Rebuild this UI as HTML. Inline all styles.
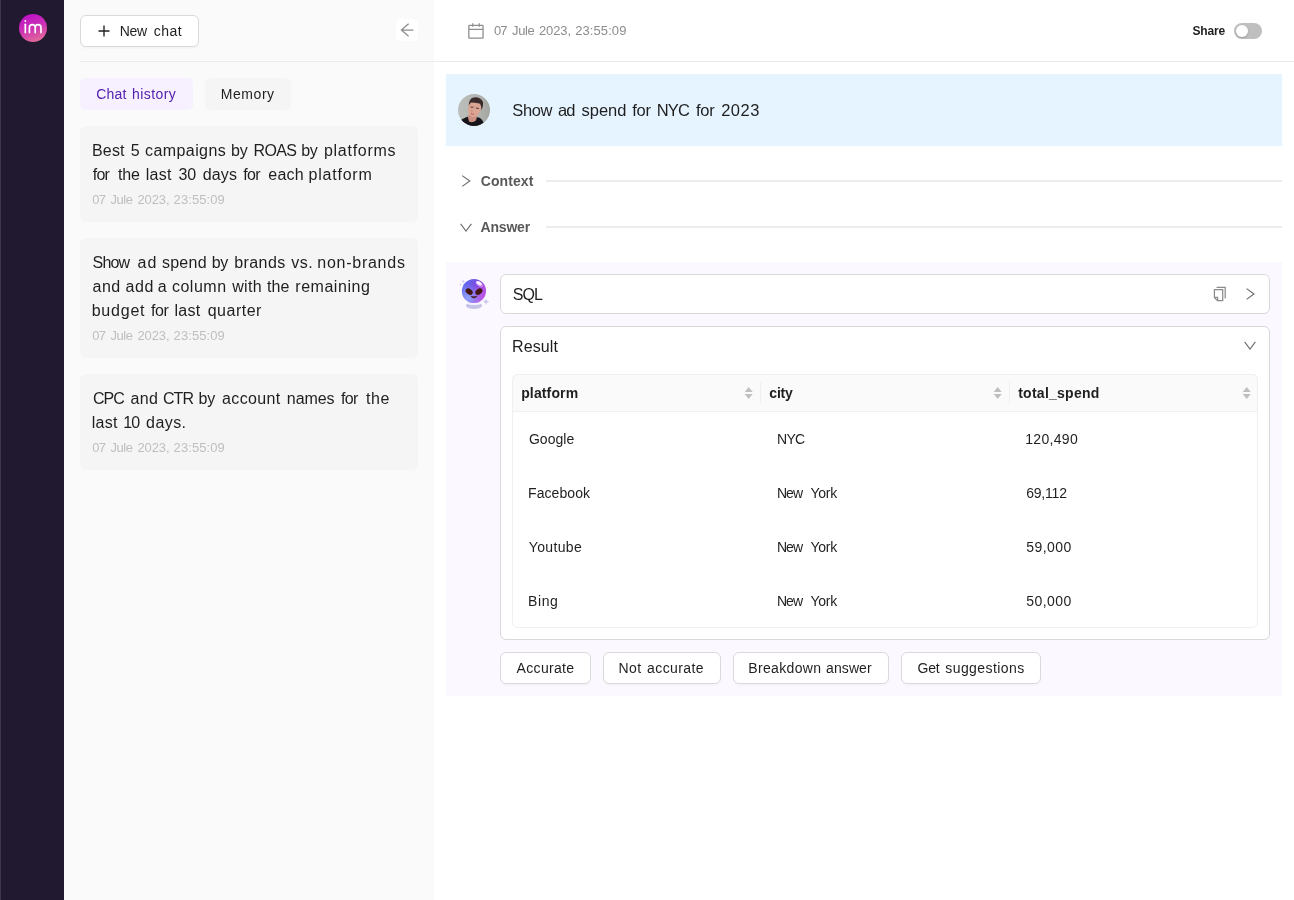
<!DOCTYPE html>
<html>
<head>
<meta charset="utf-8">
<title>Chat</title>
<style>
html,body{margin:0;padding:0;}
body{width:1294px;height:900px;overflow:hidden;background:#fff;position:relative;font-family:"Liberation Sans",sans-serif;}
.a{position:absolute;box-sizing:border-box;}
.t{position:absolute;white-space:nowrap;}
.btn{position:absolute;box-sizing:border-box;background:#fff;border:1px solid #d9d9d9;border-radius:6px;box-shadow:0 2px 0 rgba(0,0,0,0.02);}
.card{position:absolute;left:80px;width:338px;background:#f5f5f5;border-radius:6px;}
svg{position:absolute;overflow:visible;}
</style>
</head>
<body>
<!-- sidebar -->
<div class="a" style="left:0;top:0;width:64px;height:900px;background:#201930;"></div>
<div class="a" style="left:0;top:0;width:1px;height:900px;background:#3d3649;"></div>
<div class="a" style="left:19px;top:14px;width:28px;height:28px;border-radius:50%;background:linear-gradient(160deg,#bd0cc9 5%,#cc33b4 50%,#ea7a92 100%);"></div>
<svg style="left:19px;top:14px" width="28" height="28" viewBox="0 0 28 28"><g fill="none" stroke="#fff" stroke-width="1.7" stroke-linecap="round"><path d="M6.3 10.3V18.6"/><path d="M10.4 18.6V13.6a2.9 2.9 0 0 1 5.8 0V18.6M16.2 13.6a2.9 2.9 0 0 1 5.8 0V18.6"/></g><circle cx="6.3" cy="6.9" r="1" fill="#fff"/></svg>

<!-- side panel -->
<div class="a" style="left:64px;top:0;width:370px;height:900px;background:#fafafa;"></div>
<div class="a" style="left:80px;top:61px;width:1214px;height:1px;background:#ebebeb;"></div>

<div class="btn" style="left:80px;top:15px;width:119px;height:32px;"></div>
<svg style="left:98px;top:25px" width="12" height="12" viewBox="0 0 12 12"><path d="M6 0.5V11.5M0.5 6H11.5" stroke="#1f1f1f" stroke-width="1.35" fill="none"/></svg>

<div class="a" style="left:396px;top:19px;width:22px;height:22px;background:#fff;border-radius:5px;"></div>
<svg style="left:400px;top:23px" width="14" height="14" viewBox="0 0 14 14"><path d="M13.4 7H1.4M8.6 0.7L1.4 7l7.2 6.3" stroke="#8c8c8c" stroke-width="1.25" fill="none"/></svg>

<div class="a" style="left:80px;top:78px;width:113px;height:32px;background:#f7f0ff;border-radius:5px;"></div>
<div class="a" style="left:205px;top:78px;width:86px;height:32px;background:#f5f5f5;border-radius:6px;"></div>

<div class="card" style="top:126px;height:96px;"></div>
<div class="card" style="top:238px;height:120px;"></div>
<div class="card" style="top:374px;height:96px;"></div>

<!-- main header -->
<svg style="left:468px;top:23px" width="16" height="16" viewBox="0 0 16 16"><g fill="none" stroke="#8f8f8f" stroke-width="1.3"><rect x="0.85" y="2.45" width="14.2" height="12.6" rx="0.4"/><path d="M0.85 6.4H15.05M4.7 0.2V3.7M11.2 0.2V3.7"/></g></svg>
<div class="a" style="left:1234px;top:23px;width:28px;height:16px;border-radius:8px;background:#bfbfbf;"></div>
<div class="a" style="left:1236px;top:25px;width:12px;height:12px;border-radius:50%;background:#fff;box-shadow:0 1px 2px rgba(0,35,11,0.2);"></div>

<!-- question -->
<div class="a" style="left:446px;top:74px;width:836px;height:72px;background:#e6f4ff;"></div>
<svg style="left:458px;top:94px" width="32" height="32" viewBox="0 0 32 32">
<defs><clipPath id="av"><circle cx="16" cy="16" r="16"/></clipPath><linearGradient id="avb" x1="0" y1="0" x2="1" y2="0"><stop offset="0" stop-color="#bcbebb"/><stop offset="0.55" stop-color="#b4b6b2"/><stop offset="1" stop-color="#a3a6a1"/></linearGradient></defs>
<g clip-path="url(#av)">
<rect width="32" height="32" fill="url(#avb)"/>
<path d="M2 32L3.500 25.500Q8 23 11 22.300L21 23.500Q25.500 25.500 26.500 32Z" fill="#15151a"/>
<path d="M9.500 21.500L11 27.500Q14.500 29.500 18 26.500L19.800 20Z" fill="#c98f80"/>
<g transform="rotate(7 16 16)">
<path d="M10.400 10Q9.200 17 11.700 21.500Q14.700 24.600 18.200 22.600Q22.700 19 23 11Q17.200 5.500 10.400 10Z" fill="#dba594"/>
<path d="M10.200 12.500Q9.700 6 13.200 4Q19.200 1.500 23.700 6.500Q25.200 10 23.200 15.500Q23 10.500 20.700 9Q15.200 8.500 12.200 9Q10.700 10.500 10.200 12.500Z" fill="#3a2a29"/>
<path d="M12.200 13.400h3M17.700 13.800h3" stroke="#5a3a36" stroke-width="1"/>
<path d="M13.600 15.500q1 3 .3 3.600" stroke="#c98a7c" stroke-width="0.700" fill="none"/>
<path d="M13.300 20q1.500 .7 3.200 0" stroke="#c25e5c" stroke-width="1.100" fill="none"/>
</g>
</g></svg>

<!-- context / answer -->
<svg style="left:461px;top:175px" width="10" height="12" viewBox="0 0 10 12"><path d="M1.2 0.6L8.8 6L1.2 11.4" stroke="#6b6b6b" stroke-width="1.1" fill="none"/></svg>
<div class="a" style="left:546px;top:180px;width:736px;height:2px;background:#ededed;"></div>
<svg style="left:460px;top:223px" width="12" height="9" viewBox="0 0 12 9"><path d="M0.6 0.8L6 8L11.4 0.8" stroke="#6b6b6b" stroke-width="1.1" fill="none"/></svg>
<div class="a" style="left:546px;top:226px;width:736px;height:2px;background:#ededed;"></div>

<!-- answer panel -->
<div class="a" style="left:446px;top:262px;width:836px;height:434px;background:#fbf9ff;"></div>

<!-- alien -->
<svg style="left:458px;top:276px" width="34" height="34" viewBox="0 0 34 34">
<defs>
<linearGradient id="al" x1="0" y1="0.2" x2="1" y2="0.8"><stop offset="0" stop-color="#5a6ff0"/><stop offset="0.45" stop-color="#7c4ce0"/><stop offset="0.75" stop-color="#b04fe6"/><stop offset="1" stop-color="#c35de8"/></linearGradient>
<radialGradient id="al2" cx="0.25" cy="0.8" r="0.6"><stop offset="0" stop-color="#8fb0ff" stop-opacity="0.9"/><stop offset="1" stop-color="#8fb0ff" stop-opacity="0"/></radialGradient>
</defs>
<ellipse cx="16" cy="29.6" rx="8.2" ry="3.5" fill="#c6c4e6"/><ellipse cx="16" cy="26.9" rx="7.4" ry="2.2" fill="#f3f1fc"/>
<circle cx="16" cy="15" r="12.1" fill="url(#al)"/>
<circle cx="16" cy="15" r="12.1" fill="url(#al2)"/>
<ellipse cx="21.4" cy="8.2" rx="4.2" ry="2.3" transform="rotate(35 21.4 8.2)" fill="#e9a8f5" opacity="0.55"/><ellipse cx="21" cy="7.2" rx="3.1" ry="1.6" transform="rotate(32 21 7.2)" fill="#fff" opacity="0.92"/>
<ellipse cx="11.2" cy="15.6" rx="3.9" ry="2.7" transform="rotate(38 11.2 15.6)" fill="#43160f"/>
<ellipse cx="20.9" cy="15.6" rx="3.9" ry="2.7" transform="rotate(-38 20.9 15.6)" fill="#43160f"/>
<path d="M12.9 20.2Q16 23.6 19.1 20.2Q16 21.4 12.9 20.2Z" fill="#43160f" stroke="#43160f" stroke-width="0.6" stroke-linejoin="round"/>
<path d="M28 22.4l.9 2.4 2.4.9-2.4.9-.9 2.400-.9-2.400-2.400-.9 2.400-.9z" fill="#c7c4ee"/>
<path d="M5.300 3.200l.6 1.500 1.500.6-1.500.6-.6 1.500-.6-1.500-1.500-.6 1.500-.6z" fill="#d3d0f2"/>
<path d="M2.500 7.200l.45 1.100 1.100.45-1.100.45-.45 1.100-.45-1.100-1.100-.45 1.100-.45z" fill="#d3d0f2"/>
</svg>

<!-- SQL box -->
<div class="a" style="left:500px;top:274px;width:770px;height:40px;background:#fff;border:1px solid #d9d9d9;border-radius:6px;"></div>
<svg style="left:1213px;top:286px" width="14" height="16" viewBox="0 0 14 16"><g fill="none" stroke="#8c8c8c" stroke-width="1.25"><path d="M3.600 1.300H12.200V12.400"/><path d="M1.400 3.500H9.700V14.600H4.400L1.400 11.600Z"/><path d="M1.600 11.400H4.600V14.400"/></g></svg>
<svg style="left:1246px;top:288px" width="9" height="12" viewBox="0 0 9 12"><path d="M0.600 0.600L8 6L0.600 11.400" stroke="#6b6b6b" stroke-width="1.100" fill="none"/></svg>

<!-- Result box -->
<div class="a" style="left:500px;top:326px;width:770px;height:314px;background:#fff;border:1px solid #d9d9d9;border-radius:6px;"></div>
<svg style="left:1244px;top:341.4px" width="12" height="9" viewBox="0 0 12 9"><path d="M0.600 0.800L6 8L11.400 0.800" stroke="#6b6b6b" stroke-width="1.100" fill="none"/></svg>

<!-- table -->
<div class="a" style="left:512px;top:374px;width:746px;height:254px;background:#fff;border:1px solid #f0f0f0;border-radius:6px;"></div>
<div class="a" style="left:512px;top:374px;width:746px;height:38px;background:#fafafa;border:1px solid #f0f0f0;border-radius:6px 6px 0 0;"></div>
<div class="a" style="left:760px;top:382px;width:1px;height:22px;background:#f0f0f0;"></div>
<div class="a" style="left:1009px;top:382px;width:1px;height:22px;background:#f0f0f0;"></div>
<svg style="left:744px;top:387px" width="9" height="12" viewBox="0 0 9 12"><path d="M4.700 0L8.700 5H0.700Z M4.700 12L8.700 7H0.700Z" fill="#bfbfbf"/></svg>
<svg style="left:993px;top:387px" width="9" height="12" viewBox="0 0 9 12"><path d="M4.700 0L8.700 5H0.700Z M4.700 12L8.700 7H0.700Z" fill="#bfbfbf"/></svg>
<svg style="left:1241.500px;top:387px" width="9" height="12" viewBox="0 0 9 12"><path d="M4.700 0L8.700 5H0.700Z M4.700 12L8.700 7H0.700Z" fill="#bfbfbf"/></svg>

<!-- buttons -->
<div class="btn" style="left:500px;top:652px;width:91px;height:32px;"></div>
<div class="btn" style="left:603px;top:652px;width:118px;height:32px;"></div>
<div class="btn" style="left:733px;top:652px;width:156px;height:32px;"></div>
<div class="btn" style="left:901px;top:652px;width:140px;height:32px;"></div>

<div id="txt" style="position:absolute;left:0;top:0;width:1294px;height:900px;will-change:transform;">
<span class="t" style="left:119.80px;top:21.00px;font-size:14px;line-height:21px;color:#1f1f1f;letter-spacing:-0.298px;">New</span>
<span class="t" style="left:153.80px;top:21.00px;font-size:14px;line-height:21px;color:#1f1f1f;letter-spacing:0.476px;">chat</span>
<span class="t" style="left:96.30px;top:84.00px;font-size:14px;line-height:21px;color:#5521ae;letter-spacing:0.139px;">Chat</span>
<span class="t" style="left:132.00px;top:84.00px;font-size:14px;line-height:21px;color:#5521ae;letter-spacing:0.428px;">history</span>
<span class="t" style="left:220.80px;top:84.00px;font-size:14px;line-height:21px;color:#1f1f1f;letter-spacing:0.548px;">Memory</span>
<span class="t" style="left:92.00px;top:139.00px;font-size:16px;line-height:24px;color:#1f1f1f;letter-spacing:0.177px;">Best</span>
<span class="t" style="left:130.70px;top:139.00px;font-size:16px;line-height:24px;color:#1f1f1f;">5</span>
<span class="t" style="left:145.10px;top:139.00px;font-size:16px;line-height:24px;color:#1f1f1f;letter-spacing:0.403px;">campaigns</span>
<span class="t" style="left:231.00px;top:139.00px;font-size:16px;line-height:24px;color:#1f1f1f;letter-spacing:-0.198px;">by</span>
<span class="t" style="left:253.50px;top:139.00px;font-size:16px;line-height:24px;color:#1f1f1f;letter-spacing:-0.624px;">ROAS</span>
<span class="t" style="left:301.30px;top:139.00px;font-size:16px;line-height:24px;color:#1f1f1f;letter-spacing:-0.398px;">by</span>
<span class="t" style="left:323.90px;top:139.00px;font-size:16px;line-height:24px;color:#1f1f1f;letter-spacing:0.738px;">platforms</span>
<span class="t" style="left:92.80px;top:163.00px;font-size:16px;line-height:24px;color:#1f1f1f;letter-spacing:-0.822px;">for</span>
<span class="t" style="left:118.00px;top:163.00px;font-size:16px;line-height:24px;color:#1f1f1f;letter-spacing:-0.122px;">the</span>
<span class="t" style="left:145.80px;top:163.00px;font-size:16px;line-height:24px;color:#1f1f1f;letter-spacing:0.216px;">last</span>
<span class="t" style="left:178.60px;top:163.00px;font-size:16px;line-height:24px;color:#1f1f1f;letter-spacing:-0.298px;">30</span>
<span class="t" style="left:202.70px;top:163.00px;font-size:16px;line-height:24px;color:#1f1f1f;letter-spacing:0.168px;">days</span>
<span class="t" style="left:243.20px;top:163.00px;font-size:16px;line-height:24px;color:#1f1f1f;letter-spacing:-0.622px;">for</span>
<span class="t" style="left:268.30px;top:163.00px;font-size:16px;line-height:24px;color:#1f1f1f;letter-spacing:0.234px;">each</span>
<span class="t" style="left:308.60px;top:163.00px;font-size:16px;line-height:24px;color:#1f1f1f;letter-spacing:0.762px;">platform</span>
<span class="t" style="left:92.34px;top:190.00px;font-size:13px;line-height:20px;color:#bfbfbf;letter-spacing:-0.900px;">07</span>
<span class="t" style="left:110.50px;top:190.00px;font-size:13px;line-height:20px;color:#bfbfbf;letter-spacing:-0.439px;">Jule</span>
<span class="t" style="left:137.40px;top:190.00px;font-size:13px;line-height:20px;color:#bfbfbf;letter-spacing:-0.105px;">2023,</span>
<span class="t" style="left:173.60px;top:190.00px;font-size:13px;line-height:20px;color:#bfbfbf;letter-spacing:0.089px;">23:55:09</span>
<span class="t" style="left:92.50px;top:251.00px;font-size:16px;line-height:24px;color:#1f1f1f;letter-spacing:-0.790px;">Show</span>
<span class="t" style="left:137.60px;top:251.00px;font-size:16px;line-height:24px;color:#1f1f1f;letter-spacing:1.102px;">ad</span>
<span class="t" style="left:161.90px;top:251.00px;font-size:16px;line-height:24px;color:#1f1f1f;letter-spacing:0.276px;">spend</span>
<span class="t" style="left:211.70px;top:251.00px;font-size:16px;line-height:24px;color:#1f1f1f;letter-spacing:-0.398px;">by</span>
<span class="t" style="left:234.20px;top:251.00px;font-size:16px;line-height:24px;color:#1f1f1f;letter-spacing:0.436px;">brands</span>
<span class="t" style="left:291.30px;top:251.00px;font-size:16px;line-height:24px;color:#1f1f1f;letter-spacing:0.500px;">vs.</span>
<span class="t" style="left:317.30px;top:251.00px;font-size:16px;line-height:24px;color:#1f1f1f;letter-spacing:0.739px;">non-brands</span>
<span class="t" style="left:92.50px;top:275.00px;font-size:16px;line-height:24px;color:#1f1f1f;letter-spacing:0.502px;">and</span>
<span class="t" style="left:125.60px;top:275.00px;font-size:16px;line-height:24px;color:#1f1f1f;letter-spacing:0.602px;">add</span>
<span class="t" style="left:157.85px;top:275.00px;font-size:16px;line-height:24px;color:#1f1f1f;">a</span>
<span class="t" style="left:171.90px;top:275.00px;font-size:16px;line-height:24px;color:#1f1f1f;letter-spacing:0.524px;">column</span>
<span class="t" style="left:232.20px;top:275.00px;font-size:16px;line-height:24px;color:#1f1f1f;letter-spacing:0.348px;">with</span>
<span class="t" style="left:267.00px;top:275.00px;font-size:16px;line-height:24px;color:#1f1f1f;letter-spacing:0.128px;">the</span>
<span class="t" style="left:295.30px;top:275.00px;font-size:16px;line-height:24px;color:#1f1f1f;letter-spacing:0.530px;">remaining</span>
<span class="t" style="left:91.70px;top:299.00px;font-size:16px;line-height:24px;color:#1f1f1f;letter-spacing:0.782px;">budget</span>
<span class="t" style="left:151.10px;top:299.00px;font-size:16px;line-height:24px;color:#1f1f1f;letter-spacing:-0.522px;">for</span>
<span class="t" style="left:174.60px;top:299.00px;font-size:16px;line-height:24px;color:#1f1f1f;letter-spacing:0.216px;">last</span>
<span class="t" style="left:207.70px;top:299.00px;font-size:16px;line-height:24px;color:#1f1f1f;letter-spacing:0.505px;">quarter</span>
<span class="t" style="left:92.34px;top:326.00px;font-size:13px;line-height:20px;color:#bfbfbf;letter-spacing:-0.900px;">07</span>
<span class="t" style="left:110.50px;top:326.00px;font-size:13px;line-height:20px;color:#bfbfbf;letter-spacing:-0.439px;">Jule</span>
<span class="t" style="left:137.40px;top:326.00px;font-size:13px;line-height:20px;color:#bfbfbf;letter-spacing:-0.105px;">2023,</span>
<span class="t" style="left:173.60px;top:326.00px;font-size:13px;line-height:20px;color:#bfbfbf;letter-spacing:0.089px;">23:55:09</span>
<span class="t" style="left:92.94px;top:387.00px;font-size:16px;line-height:24px;color:#1f1f1f;letter-spacing:-0.900px;">CPC</span>
<span class="t" style="left:130.60px;top:387.00px;font-size:16px;line-height:24px;color:#1f1f1f;letter-spacing:0.252px;">and</span>
<span class="t" style="left:162.89px;top:387.00px;font-size:16px;line-height:24px;color:#1f1f1f;letter-spacing:-0.900px;">CTR</span>
<span class="t" style="left:198.40px;top:387.00px;font-size:16px;line-height:24px;color:#1f1f1f;letter-spacing:-0.098px;">by</span>
<span class="t" style="left:222.00px;top:387.00px;font-size:16px;line-height:24px;color:#1f1f1f;letter-spacing:0.368px;">account</span>
<span class="t" style="left:286.80px;top:387.00px;font-size:16px;line-height:24px;color:#1f1f1f;letter-spacing:-0.056px;">names</span>
<span class="t" style="left:340.90px;top:387.00px;font-size:16px;line-height:24px;color:#1f1f1f;letter-spacing:-0.672px;">for</span>
<span class="t" style="left:365.90px;top:387.00px;font-size:16px;line-height:24px;color:#1f1f1f;letter-spacing:0.578px;">the</span>
<span class="t" style="left:91.70px;top:411.00px;font-size:16px;line-height:24px;color:#1f1f1f;letter-spacing:0.282px;">last</span>
<span class="t" style="left:123.20px;top:411.00px;font-size:16px;line-height:24px;color:#1f1f1f;letter-spacing:-0.900px;">10</span>
<span class="t" style="left:146.10px;top:411.00px;font-size:16px;line-height:24px;color:#1f1f1f;letter-spacing:0.426px;">days.</span>
<span class="t" style="left:92.34px;top:438.00px;font-size:13px;line-height:20px;color:#bfbfbf;letter-spacing:-0.900px;">07</span>
<span class="t" style="left:110.50px;top:438.00px;font-size:13px;line-height:20px;color:#bfbfbf;letter-spacing:-0.439px;">Jule</span>
<span class="t" style="left:137.40px;top:438.00px;font-size:13px;line-height:20px;color:#bfbfbf;letter-spacing:-0.105px;">2023,</span>
<span class="t" style="left:173.60px;top:438.00px;font-size:13px;line-height:20px;color:#bfbfbf;letter-spacing:0.089px;">23:55:09</span>
<span class="t" style="left:493.94px;top:21.00px;font-size:13px;line-height:20px;color:#8c8c8c;letter-spacing:-0.900px;">07</span>
<span class="t" style="left:512.10px;top:21.00px;font-size:13px;line-height:20px;color:#8c8c8c;letter-spacing:-0.439px;">Jule</span>
<span class="t" style="left:539.00px;top:21.00px;font-size:13px;line-height:20px;color:#8c8c8c;letter-spacing:-0.105px;">2023,</span>
<span class="t" style="left:575.20px;top:21.00px;font-size:13px;line-height:20px;color:#8c8c8c;letter-spacing:0.089px;">23:55:09</span>
<span class="t" style="left:1192.40px;top:22.00px;font-size:12px;line-height:18px;color:#1f1f1f;font-weight:700;letter-spacing:-0.119px;">Share</span>
<span class="t" style="left:512.30px;top:98.00px;font-size:16.5px;line-height:25px;color:#1f1f1f;letter-spacing:-0.419px;">Show</span>
<span class="t" style="left:558.00px;top:98.00px;font-size:16.5px;line-height:25px;color:#1f1f1f;letter-spacing:-0.877px;">ad</span>
<span class="t" style="left:581.60px;top:98.00px;font-size:16.5px;line-height:25px;color:#1f1f1f;letter-spacing:-0.045px;">spend</span>
<span class="t" style="left:632.20px;top:98.00px;font-size:16.5px;line-height:25px;color:#1f1f1f;letter-spacing:-0.230px;">for</span>
<span class="t" style="left:656.84px;top:98.00px;font-size:16.5px;line-height:25px;color:#1f1f1f;letter-spacing:-0.900px;">NYC</span>
<span class="t" style="left:695.90px;top:98.00px;font-size:16.5px;line-height:25px;color:#1f1f1f;letter-spacing:-0.180px;">for</span>
<span class="t" style="left:721.20px;top:98.00px;font-size:16.5px;line-height:25px;color:#1f1f1f;letter-spacing:0.490px;">2023</span>
<span class="t" style="left:480.80px;top:171.00px;font-size:14px;line-height:21px;color:#595959;font-weight:700;letter-spacing:0.075px;">Context</span>
<span class="t" style="left:480.50px;top:217.00px;font-size:14px;line-height:21px;color:#595959;font-weight:700;letter-spacing:-0.185px;">Answer</span>
<span class="t" style="left:512.64px;top:283.00px;font-size:16px;line-height:24px;color:#1f1f1f;letter-spacing:-0.900px;">SQL</span>
<span class="t" style="left:512.00px;top:335.00px;font-size:16px;line-height:24px;color:#1f1f1f;letter-spacing:0.099px;">Result</span>
<span class="t" style="left:521.20px;top:383.00px;font-size:14px;line-height:21px;color:#1f1f1f;font-weight:700;letter-spacing:0.135px;">platform</span>
<span class="t" style="left:769.30px;top:383.00px;font-size:14px;line-height:21px;color:#1f1f1f;font-weight:700;letter-spacing:-0.179px;">city</span>
<span class="t" style="left:1018.20px;top:383.00px;font-size:14px;line-height:21px;color:#1f1f1f;font-weight:700;letter-spacing:0.259px;">total_spend</span>
<span class="t" style="left:528.90px;top:429.00px;font-size:14px;line-height:21px;color:#1f1f1f;letter-spacing:0.048px;">Google</span>
<span class="t" style="left:528.00px;top:483.00px;font-size:14px;line-height:21px;color:#1f1f1f;letter-spacing:0.074px;">Facebook</span>
<span class="t" style="left:528.80px;top:537.00px;font-size:14px;line-height:21px;color:#1f1f1f;letter-spacing:0.336px;">Youtube</span>
<span class="t" style="left:528.00px;top:591.00px;font-size:14px;line-height:21px;color:#1f1f1f;letter-spacing:0.589px;">Bing</span>
<span class="t" style="left:776.90px;top:429.00px;font-size:14px;line-height:21px;color:#1f1f1f;letter-spacing:-0.624px;">NYC</span>
<span class="t" style="left:776.90px;top:483.00px;font-size:14px;line-height:21px;color:#1f1f1f;letter-spacing:-0.898px;">New</span>
<span class="t" style="left:810.40px;top:483.00px;font-size:14px;line-height:21px;color:#1f1f1f;letter-spacing:-0.234px;">York</span>
<span class="t" style="left:776.90px;top:537.00px;font-size:14px;line-height:21px;color:#1f1f1f;letter-spacing:-0.898px;">New</span>
<span class="t" style="left:810.40px;top:537.00px;font-size:14px;line-height:21px;color:#1f1f1f;letter-spacing:-0.234px;">York</span>
<span class="t" style="left:776.90px;top:591.00px;font-size:14px;line-height:21px;color:#1f1f1f;letter-spacing:-0.898px;">New</span>
<span class="t" style="left:810.40px;top:591.00px;font-size:14px;line-height:21px;color:#1f1f1f;letter-spacing:-0.234px;">York</span>
<span class="t" style="left:1025.20px;top:429.00px;font-size:14px;line-height:21px;color:#1f1f1f;letter-spacing:0.330px;">120,490</span>
<span class="t" style="left:1026.20px;top:483.00px;font-size:14px;line-height:21px;color:#1f1f1f;letter-spacing:-0.199px;">69,112</span>
<span class="t" style="left:1026.20px;top:537.00px;font-size:14px;line-height:21px;color:#1f1f1f;letter-spacing:0.433px;">59,000</span>
<span class="t" style="left:1026.20px;top:591.00px;font-size:14px;line-height:21px;color:#1f1f1f;letter-spacing:0.433px;">50,000</span>
<span class="t" style="left:516.60px;top:658.00px;font-size:14px;line-height:21px;color:#1f1f1f;letter-spacing:0.320px;">Accurate</span>
<span class="t" style="left:618.50px;top:658.00px;font-size:14px;line-height:21px;color:#1f1f1f;letter-spacing:0.452px;">Not</span>
<span class="t" style="left:647.10px;top:658.00px;font-size:14px;line-height:21px;color:#1f1f1f;letter-spacing:0.399px;">accurate</span>
<span class="t" style="left:748.30px;top:658.00px;font-size:14px;line-height:21px;color:#1f1f1f;letter-spacing:0.343px;">Breakdown</span>
<span class="t" style="left:826.10px;top:658.00px;font-size:14px;line-height:21px;color:#1f1f1f;letter-spacing:0.086px;">answer</span>
<span class="t" style="left:917.50px;top:658.00px;font-size:14px;line-height:21px;color:#1f1f1f;letter-spacing:-0.188px;">Get</span>
<span class="t" style="left:945.30px;top:658.00px;font-size:14px;line-height:21px;color:#1f1f1f;letter-spacing:0.418px;">suggestions</span>
</div>
</body>
</html>
